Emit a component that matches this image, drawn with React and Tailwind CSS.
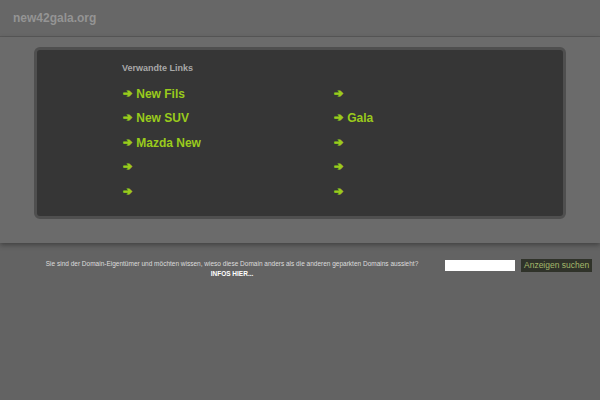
import React from 'react';

const links = [
  ['New Fils', ''],
  ['New SUV', 'Gala'],
  ['Mazda New', ''],
  ['', ''],
  ['', ''],
];

const LinkItem = ({ label }) => (
  <a href="#" className="flex items-center h-[24.5px] pl-[1px] text-[12px] font-bold text-[#9acb1c] no-underline">
    <span className="font-['DejaVu_Sans',sans-serif] font-bold text-[11px] mr-[4px] [-webkit-text-stroke:0.9px_#9acb1c]">➔</span>
    {label}
  </a>
);

export default function App() {
  return (
    <div className="min-h-[400px] bg-[#636363] font-['Liberation_Sans',Arial,sans-serif]">
      {/* Header */}
      <div className="h-[37px] bg-[#676767] border-b border-[#5a5a5a] flex items-center pl-[13px]">
        <span className="text-[12px] font-bold text-[#949494]">new42gala.org</span>
      </div>

      {/* Main band */}
      <div className="bg-[#6b6b6b] pt-[10px] pb-[24px] shadow-[0_2px_5px_rgba(0,0,0,0.35)] relative">
        <div className="mx-[34px] h-[172px] rounded-[6px] border-[3px] border-[#4f4f4f] bg-[#363636] pl-[85px] pt-[12px]">
          <div className="text-[9px] font-bold text-[#a8a8a8] mb-[6px]">Verwandte Links</div>
          <div className="grid grid-cols-[211px_1fr]">
            {links.map(([a, b], i) => (
              <React.Fragment key={i}>
                <LinkItem label={a} />
                <LinkItem label={b} />
              </React.Fragment>
            ))}
          </div>
        </div>
      </div>

      {/* Footer */}
      <div className="flex items-start pt-[16px]">
        <div className="w-[444px] pl-[20px] text-center text-[6.5px] leading-[10px] text-[#dddddd]">
          <p>Sie sind der Domain-Eigentümer und möchten wissen, wieso diese Domain anders als die anderen geparkten Domains aussieht?</p>
          <p className="font-bold text-white">INFOS HIER...</p>
        </div>
        <input type="text" className="ml-[1px] mt-[1px] w-[70px] h-[11px] bg-white border-0 outline-none" />
        <button className="ml-[6px] h-[13px] px-[3px] bg-[#30332a] text-[#a4b96a] text-[8.5px] leading-[13px]">Anzeigen suchen</button>
      </div>
    </div>
  );
}
